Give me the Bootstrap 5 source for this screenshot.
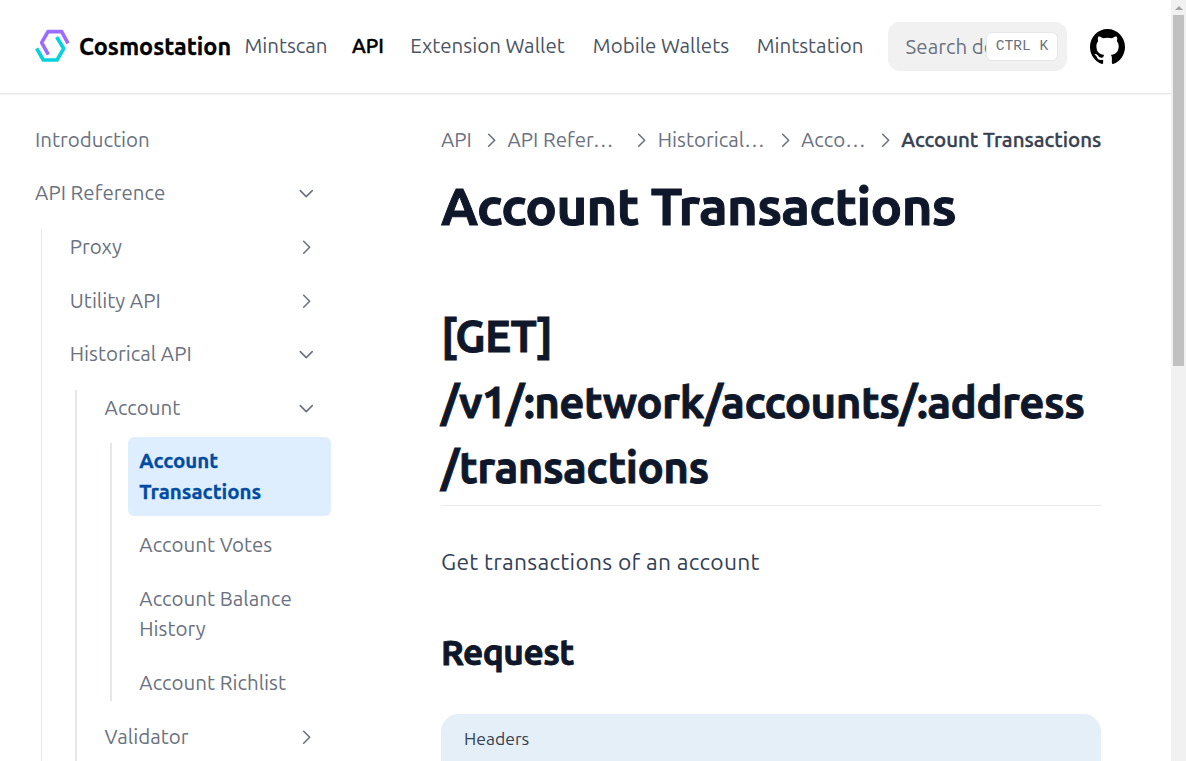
<!DOCTYPE html>
<html lang="en">
<head>
<meta charset="utf-8">
<meta name="viewport" content="width=device-width, initial-scale=1">
<title>Account Transactions – Cosmostation</title>
<link href="https://cdn.jsdelivr.net/npm/bootstrap@5.3.0/dist/css/bootstrap.min.css" rel="stylesheet">
<style>
html{font-size:23.43px}
body{font-family:"Ubuntu","Noto Sans",sans-serif;height:761px;color:#334155;line-height:1.75}
a{color:inherit;text-decoration:none}
.txt-sm{font-size:.875rem}
/* top bar */
.topbar{height:93px;padding-left:35px;box-shadow:0 1px 0 #e9e9eb,0 2px 1px #f6f6f6;position:relative;flex:none}
.brand-name{font-size:1rem;color:#000;margin-left:9px;width:155px;-webkit-text-stroke:.3px}
.topnav{display:grid;grid-template-columns:104px 60px 179px 168px 130px;text-align:center;color:#4b5563;line-height:30px;margin-top:-1px}
.topnav .current{color:#000;font-weight:500;-webkit-text-stroke:.4px}
.searchbox{width:179px;height:49px;margin-left:13px;border-radius:11.7px;background:#f1f1f1;padding-left:17.6px;position:relative;color:#6b7280;line-height:49px;font-size:20.5px}
.search-hint{width:80.4px}
.hotkey{position:absolute;right:9px;top:10px;width:72px;height:29px;border:1px solid #e5e7eb;border-radius:6px;background:#fff;font:14.64px/26px "Liberation Mono",monospace;color:#6b7280;text-align:center;white-space:pre;padding:0}
.gh-link{margin-left:23px}
/* sidebar */
.sidebar{width:331px;flex:none;padding:22.9px 0 0 23.4px;color:#6b7280;line-height:30.3px}
.tree{list-style:none;margin:0;padding:0;display:flex;flex-direction:column;gap:5.8px}
.tree .tree{margin:5.8px 0 0 17.2px;padding-left:17.57px;position:relative}
.tree .tree .tree .tree{margin-top:5.2px;margin-bottom:.4px}
.tree .tree::before{content:"";position:absolute;left:0;top:5.8px;bottom:5.8px;width:1px;background:#e5e7eb}
.tree .tree.continues::before{bottom:-20px}
.tree .tree .tree::before{width:2px}
.tree-item{display:flex;justify-content:space-between;align-items:center;padding:8.8px 11.7px;border-radius:6px}
.tree-item.current{background:#dfeefe;color:#004ca3;font-weight:700;-webkit-text-stroke:.3px}
.chev{width:20.5px;height:20.5px;flex:none;fill:none;stroke:currentColor;stroke-width:1.9;stroke-linecap:round;stroke-linejoin:round}
.tree-item .chev{margin-right:3px}
.chev.open{transform:rotate(90deg)}
/* article */
.article{margin-left:110px;width:660px;padding-top:32px}
.crumbs{display:grid;grid-template-columns:34.2px 20.5px 118.2px 20.5px 111px 20.5px 68px 20.5px auto;column-gap:5.86px;align-items:center;line-height:30px;color:#6b7280;white-space:nowrap}
.crumbs .current{color:#374151;font-weight:500;-webkit-text-stroke:.35px}
h1,h2,h3{color:#0f172a;font-weight:700;letter-spacing:-.0125em;margin:0;-webkit-text-stroke:.8px}
h1{font-size:2.25rem;line-height:58px;margin-top:22px;-webkit-text-stroke-width:1px}
h2{font-size:1.875rem;line-height:65.6px;margin-top:68px;padding-bottom:5px;border-bottom:1px solid #e9eaeb}
h3{font-size:1.5rem;line-height:50px;margin-top:45px}
.intro{font-size:22.8px;letter-spacing:.27px;line-height:41px;margin:35px 0 0}
.codehead{height:60px;margin-top:37px;border-radius:17.6px 17.6px 0 0;background:#e5eff8;padding:0 23px;font-size:.75rem;line-height:50px;color:#374151}
/* scroll track */
.track{width:15px;background:#f1f1f1;flex:none}
.track-arrow{width:0;height:0;border:4px solid transparent;border-top:0;border-bottom:4px solid #a3a3a3;margin:6px auto 5px}
.track-thumb{height:351px;width:11px;background:#c1c1c1;margin:0 auto}
</style>
<script src="https://cdn.jsdelivr.net/npm/bootstrap@5.3.0/dist/js/bootstrap.bundle.min.js"></script>
</head>
<body class="d-flex overflow-hidden bg-white">
<svg class="d-none"><symbol id="chev" viewBox="0 0 24 24"><path d="M9 5l7 7-7 7"/></symbol></svg>
<div class="flex-grow-1 d-flex flex-column overflow-hidden">
  <header class="topbar d-flex align-items-center">
    <a href="#" class="d-flex align-items-center">
      <svg width="35" height="34" viewBox="45 42 105 102" fill="none" stroke-width="11" stroke-linejoin="round">
        <path stroke="#9b6dff" d="M144 85 125 50H84L65 83 85 119"/>
        <path stroke="#05d2dd" d="M50 100 70 135H111L131 101 110 66"/>
      </svg>
      <span class="brand-name fw-bold">Cosmostation</span>
    </a>
    <nav class="topnav txt-sm">
      <a href="#">Mintscan</a><a href="#" class="current">API</a><a href="#">Extension Wallet</a><a href="#">Mobile Wallets</a><a href="#">Mintstation</a>
    </nav>
    <div class="searchbox text-nowrap"><div class="search-hint overflow-hidden">Search documentation</div><kbd class="hotkey">CTRL K</kbd></div>
    <a href="#" class="gh-link d-flex" aria-label="GitHub">
      <svg width="35" height="35" viewBox="3 3 18 18" fill="#000"><path d="M12 3C7.0275 3 3 7.12937 3 12.2276C3 16.3109 5.57625 19.7597 9.15374 20.9824C9.60374 21.0631 9.77249 20.7863 9.77249 20.5441C9.77249 20.3249 9.76125 19.5982 9.76125 18.8254C7.5 19.2522 6.915 18.2602 6.735 17.7412C6.63375 17.4759 6.19499 16.6569 5.8125 16.4378C5.4975 16.2647 5.0475 15.838 5.80124 15.8264C6.51 15.8149 7.01625 16.4954 7.18499 16.7723C7.99499 18.1679 9.28875 17.7758 9.80625 17.5335C9.885 16.9337 10.1212 16.53 10.38 16.2993C8.3775 16.0687 6.285 15.2728 6.285 11.7432C6.285 10.7397 6.63375 9.9092 7.20749 9.26326C7.1175 9.03257 6.8025 8.08674 7.2975 6.81794C7.2975 6.81794 8.05125 6.57571 9.77249 7.76377C10.4925 7.55615 11.2575 7.45234 12.0225 7.45234C12.7875 7.45234 13.5525 7.55615 14.2725 7.76377C15.9937 6.56418 16.7475 6.81794 16.7475 6.81794C17.2424 8.08674 16.9275 9.03257 16.8375 9.26326C17.4113 9.9092 17.76 10.7281 17.76 11.7432C17.76 15.2843 15.6563 16.0687 13.6537 16.2993C13.98 16.5877 14.2613 17.1414 14.2613 18.0065C14.2613 19.2407 14.25 20.2326 14.25 20.5441C14.25 20.7863 14.4188 21.0746 14.8688 20.9824C16.6554 20.364 18.2079 19.1866 19.3078 17.6162C20.4077 16.0457 20.9995 14.1611 21 12.2276C21 7.12937 16.9725 3 12 3Z"/></svg>
    </a>
  </header>
  <div class="d-flex">
    <aside class="sidebar txt-sm">
      <ul class="tree">
        <li><a href="#" class="tree-item">Introduction</a></li>
        <li><a href="#" class="tree-item">API Reference<svg class="chev open"><use href="#chev"/></svg></a>
          <ul class="tree continues">
            <li><a href="#" class="tree-item">Proxy<svg class="chev"><use href="#chev"/></svg></a></li>
            <li><a href="#" class="tree-item">Utility API<svg class="chev"><use href="#chev"/></svg></a></li>
            <li><a href="#" class="tree-item">Historical API<svg class="chev open"><use href="#chev"/></svg></a>
              <ul class="tree continues">
                <li><a href="#" class="tree-item">Account<svg class="chev open"><use href="#chev"/></svg></a>
                  <ul class="tree">
                    <li><a href="#" class="tree-item current">Account Transactions</a></li>
                    <li><a href="#" class="tree-item">Account Votes</a></li>
                    <li><a href="#" class="tree-item">Account Balance History</a></li>
                    <li><a href="#" class="tree-item">Account Richlist</a></li>
                  </ul>
                </li>
                <li><a href="#" class="tree-item">Validator<svg class="chev"><use href="#chev"/></svg></a></li>
              </ul>
            </li>
          </ul>
        </li>
      </ul>
    </aside>
    <main class="article">
      <nav class="crumbs txt-sm">
        <a href="#">API</a><svg class="chev"><use href="#chev"/></svg>
        <a href="#">API Refer…</a><svg class="chev"><use href="#chev"/></svg>
        <a href="#">Historical…</a><svg class="chev"><use href="#chev"/></svg>
        <a href="#">Acco…</a><svg class="chev"><use href="#chev"/></svg>
        <span class="current">Account Transactions</span>
      </nav>
      <h1>Account Transactions</h1>
      <h2>[GET]<br>/v1/:network/accounts/:address<br>/transactions</h2>
      <p class="intro">Get transactions of an account</p>
      <h3>Request</h3>
      <div class="codehead">Headers</div>
    </main>
  </div>
</div>
<div class="track"><div class="track-arrow"></div><div class="track-thumb"></div></div>
</body>
</html>
